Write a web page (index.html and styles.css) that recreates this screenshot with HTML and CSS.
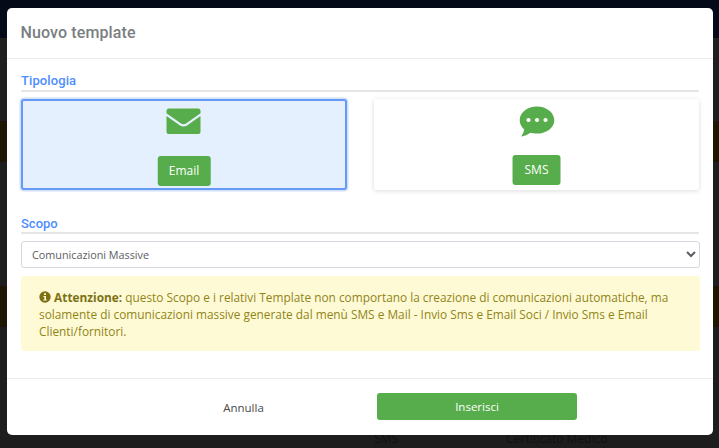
FILE: index.html
```html
<!DOCTYPE html>
<html lang="it">
<head>
<meta charset="utf-8">
<title>Nuovo template</title>
<link rel="stylesheet" href="styles.css">
</head>
<body>
<div class="backdrop">
  <div class="bg-top"></div>
  <div class="bg-gap1"></div>
  <div class="bg-warn"></div>
  <div class="bg-gap2"></div>
  <div class="bg-warn"></div>
  <div class="bg-rest">
    <span class="bg-cell">SMS</span>
    <span class="bg-cell">Certificato Medico</span>
  </div>
</div>
<div class="modal">
  <header class="modal-header"><h1 class="modal-title">Nuovo template</h1></header>
  <div class="modal-body">
    <h2 class="section-label">Tipologia</h2>
    <div class="type-grid">
      <div class="type-card selected">
        <svg class="type-icon" width="36" height="28" viewBox="0 0 36 28"><path class="icon-fill" d="M3 1.500h29a2.500 2.500 0 0 1 2.500 2.500v2.200L20 16.500c-1.500 1-3.500 1-5 0L.5 6.200V4A2.500 2.500 0 0 1 3 1.500z"/><path class="icon-fill" d="M.5 9l13.500 9.500c2 1.400 5 1.400 7 0L34.500 9v16a2 2 0 0 1-2 2h-30a2 2 0 0 1-2-2z"/></svg>
        <span class="type-btn">Email</span>
      </div>
      <div class="type-card">
        <svg class="type-icon" width="36" height="32" viewBox="0 0 36 32"><path class="icon-fill" d="M18 .5C8.400.500.700 6.600.700 14.200c0 3.600 1.700 6.800 4.500 9.200-.4 2.700-1.800 5.400-3 7 3.300-.2 6.700-1.800 9.200-3.600 1.800.5 3.700.8 6.600.8 9.600 0 17.300-6 17.300-13.400S27.600.500 18 .500z"/><circle class="icon-dot" cx="9.500" cy="14" r="2.100"/><circle class="icon-dot" cx="18" cy="14" r="2.100"/><circle class="icon-dot" cx="26.500" cy="14" r="2.100"/></svg>
        <span class="type-btn">SMS</span>
      </div>
    </div>
    <h2 class="section-label scope-label">Scopo</h2>
    <select class="scope-select"><option>Comunicazioni Massive</option></select>
    <div class="alert">
      <svg class="alert-icon" width="12" height="12" viewBox="0 0 12 12"><circle class="alert-circle" cx="6" cy="6" r="5.700"/><rect class="alert-mark" x="5" y="2.200" width="2" height="1.900" rx=".4"/><path class="alert-mark" d="M4.500 5h2.500v3.500h.7v1H4.400v-1h.9V6h-.8z"/></svg>
      <strong>Attenzione:</strong> questo Scopo e i relativi Template non comportano la creazione di comunicazioni automatiche, ma solamente di comunicazioni massive generate dal menù SMS e Mail - Invio Sms e Email Soci / Invio Sms e Email Clienti/fornitori.
    </div>
  </div>
  <footer class="modal-footer">
    <button class="btn-cancel">Annulla</button>
    <button class="btn-submit">Inserisci</button>
  </footer>
</div>
</body>
</html>
```
FILE: styles.css
```css
* { box-sizing: border-box; }
html, body { margin: 0; padding: 0; height: 100%; overflow: hidden; }
body { background: #1e1e1e; font-family: "Open Sans", sans-serif; }
.backdrop { display: flex; flex-direction: column; height: 448px; }
.bg-top { height: 38px; background: #050a18; }
.bg-gap1 { height: 83px; background: #1f1f1f; }
.bg-warn { height: 41px; background: #1d1602; }
.bg-gap2 { height: 124px; background: #1e1e1e; }
.bg-rest { flex: 1; display: flex; align-items: flex-end; padding-left: 374px; gap: 108px; background: #1d1d1d; font-size: 12px; line-height: 16px; color: #111; padding-bottom: 1px; }
.modal { position: absolute; left: 7px; top: 8px; width: 706px; height: 427px; background: #fff; border-radius: 5px; display: flex; flex-direction: column; }
.modal-header { height: 51px; border-bottom: 1px solid #e9ecef; padding: 15px 14px 0; flex: none; }
.modal-title { margin: 0 0 0 -.5px; font: 500 16px/20px Roboto, sans-serif; color: #7a7e82; letter-spacing: .12px; }
.modal-body { flex: 1; padding: 14px 14px 0; }
.section-label { margin: 0; height: 19px; border-bottom: 2px solid #e4e5e7; font: 500 13px/15px Roboto, sans-serif; color: #4d8dff; letter-spacing: .1px; }
.type-grid { display: grid; grid-template-columns: 326px 325px; column-gap: 27px; margin-top: 7px; }
.type-card { height: 91px; border-radius: 3px; background: #fff; box-shadow: 0 1px 5px rgba(0,0,0,.14); display: flex; flex-direction: column; align-items: center; position: relative; }
.type-card.selected { background: #e4f0fd; border: 2px solid #669af5; box-shadow: 0 0 0 1.500px #cfe0fb; }
.type-icon { position: absolute; top: 7px; left: 50%; transform: translateX(-50%); }
.selected .type-icon { top: 6px; }
.type-btn { position: absolute; top: 56px; left: 50%; transform: translateX(-50%); height: 30px; padding: 0 12.500px; border-radius: 3px; background: #57ad4b; color: #fff; font: 12px/30px "Open Sans", sans-serif; }
.selected .type-btn { top: 55px; padding: 0 11px; }
.icon-fill { fill: #57ad4b; }
.icon-dot { fill: #fff; }
.scope-label { margin-top: 25px; line-height: 17px; letter-spacing: 0; }
.scope-select { display: block; width: 679px; height: 27px; margin-top: 7px; padding: 0 6px; border: 1px solid #d5d8de; border-radius: 3px; background: #fff; color: #5a5e62; font: 10.800px "Open Sans", sans-serif; }
.alert { margin-top: 8px; width: 679px; height: 75px; padding: 12.500px 18px; border-radius: 3px; background: #fffad6; color: #8f8516; font: 11.850px/17.300px "Open Sans", sans-serif; }
.alert strong { font-weight: 700; color: #7b7112; }
.alert-icon { vertical-align: -1.500px; }
.alert-circle { fill: #7b7112; }
.alert-mark { fill: #fffad6; }
.modal-footer { height: 57px; flex: none; border-top: 1px solid #e9ecef; display: grid; grid-template-columns: 370px 200px; align-items: start; padding-top: 14px; }
.btn-cancel { height: 28px; border: 0; background: transparent; color: #4a4a4a; font: 11.500px "Open Sans", sans-serif; padding: 0 0 0 103px; }
.btn-submit { height: 27px; border: 0; border-radius: 3px; background: #57ad4b; color: #fff; font: 11.500px "Open Sans", sans-serif; }
```
